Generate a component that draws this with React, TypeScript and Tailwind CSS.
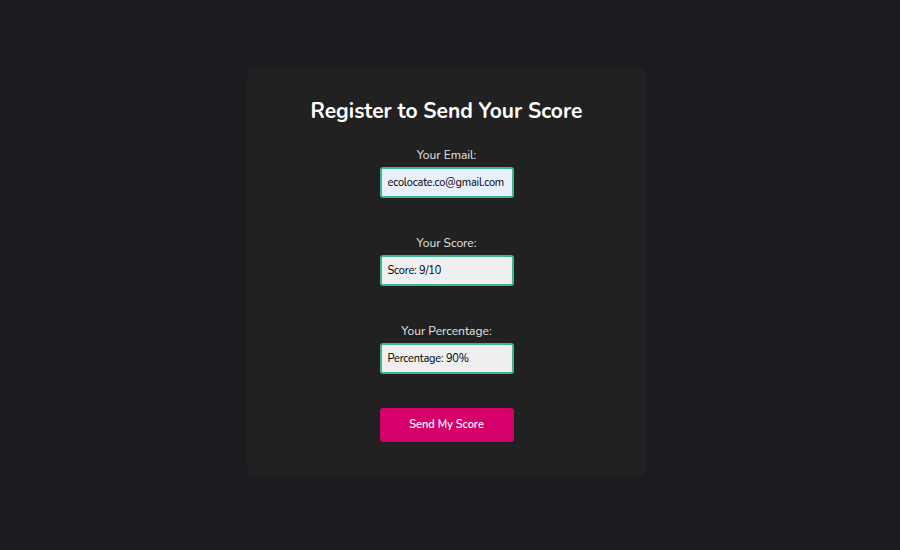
export default function App() {
  return (
    <main className="flex min-h-screen items-center justify-center bg-[#1b1c20] pb-[6px] pr-[7px] font-['Nunito','Lato','Noto_Sans',sans-serif]">
      <div className="flex w-[399px] flex-col items-center rounded-lg bg-[#212121] pt-[29px] pb-[34px]">
        <h1 className="text-[21px] leading-[28px] font-bold text-white">Register to Send Your Score</h1>

        <form className="mt-[22px] flex flex-col items-center" onSubmit={(e) => e.preventDefault()}>
          <label className="text-[12px] leading-[16px] text-[#e5e5e5]">Your Email:</label>
          <input
            type="text"
            defaultValue="ecolocate.co@gmail.com"
            className="mt-[4px] h-[31px] w-[134px] rounded-[3px] border-2 border-[#3fb68f] bg-[#e8f0fe] px-[6px] text-[11px] tracking-[-0.2px] text-black outline-none"
          />

          <label className="mt-[37px] text-[12px] leading-[16px] text-[#e5e5e5]">Your Score:</label>
          <input
            type="text"
            defaultValue="Score: 9/10"
            readOnly
            className="mt-[4px] h-[31px] w-[134px] rounded-[3px] border-2 border-[#3fb68f] bg-[#efefef] px-[6px] text-[11px] tracking-[-0.2px] text-black outline-none"
          />

          <label className="mt-[37px] text-[12px] leading-[16px] text-[#e5e5e5]">Your Percentage:</label>
          <input
            type="text"
            defaultValue="Percentage: 90%"
            readOnly
            className="mt-[4px] h-[31px] w-[134px] rounded-[3px] border-2 border-[#3fb68f] bg-[#efefef] px-[6px] text-[11px] tracking-[-0.2px] text-black outline-none"
          />

          <button
            type="submit"
            className="mt-[34px] h-[34px] w-[134px] rounded-[3px] bg-[#d6006a] text-[11px] font-semibold text-white"
          >
            Send My Score
          </button>
        </form>
      </div>
    </main>
  );
}
